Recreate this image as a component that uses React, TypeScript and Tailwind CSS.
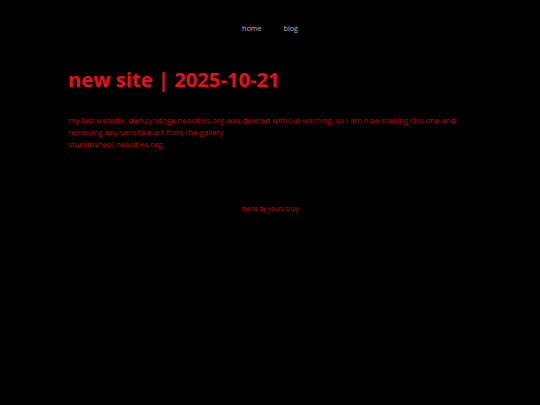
export default function App() {
  return (
    <div className="min-h-[405px] w-full bg-black" style={{ fontFamily: '"Open Sans", "Noto Sans", sans-serif' }}>
      <nav className="flex justify-center gap-[22px] pt-[23px] text-[7.2px] leading-[10px] text-[#c9b3bd]">
        <a>home</a>
        <a>blog</a>
      </nav>
      <main className="px-[68px] pt-[33px]">
        <h1 className="text-[20.2px] font-bold leading-[27px] text-[#e5101a]">new site | 2025-10-21</h1>
        <p className="mt-[21px] text-[8px] leading-[12px] tracking-[-0.08px] text-[#c00000]">
          my last website, darkcyndoge.neocities.org was deleted without warning, so i am now making this one and removing any sensitive art from the gallery
          <br />
          stuckinsheol.neocities.org
        </p>
      </main>
      <footer className="mt-[54px] text-center text-[6.2px] leading-[9px] text-[#d00000]">made by yours truly</footer>
    </div>
  );
}
